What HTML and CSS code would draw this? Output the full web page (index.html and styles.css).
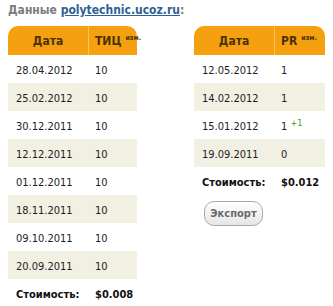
FILE: index.html
```html
<!DOCTYPE html>
<html>
<head>
<meta charset="utf-8">
<link rel="stylesheet" href="styles.css">
</head>
<body>
<div class="title">Данные <a class="site" href="#">polytechnic.ucoz.ru</a>:</div>
<div class="wrap">
  <table class="tbl">
    <thead>
      <tr><th class="c1">Дата</th><th class="c2">ТИЦ<sup class="chg">изм.</sup></th></tr>
    </thead>
    <tbody>
      <tr><td class="d">28.04.2012</td><td class="v">10</td></tr>
      <tr class="alt"><td class="d">25.02.2012</td><td class="v">10</td></tr>
      <tr><td class="d">30.12.2011</td><td class="v">10</td></tr>
      <tr class="alt"><td class="d">12.12.2011</td><td class="v">10</td></tr>
      <tr><td class="d">01.12.2011</td><td class="v">10</td></tr>
      <tr class="alt"><td class="d">18.11.2011</td><td class="v">10</td></tr>
      <tr><td class="d">09.10.2011</td><td class="v">10</td></tr>
      <tr class="alt"><td class="d">20.09.2011</td><td class="v">10</td></tr>
      <tr class="cost"><td class="d">Стоимость:</td><td class="v">$0.008</td></tr>
    </tbody>
  </table>
  <div class="side">
    <table class="tbl">
      <thead>
        <tr><th class="c1">Дата</th><th class="c2">PR<sup class="chg">изм.</sup></th></tr>
      </thead>
      <tbody>
        <tr><td class="d">12.05.2012</td><td class="v">1</td></tr>
        <tr class="alt"><td class="d">14.02.2012</td><td class="v">1</td></tr>
        <tr><td class="d">15.01.2012</td><td class="v">1 <sup class="up">+1</sup></td></tr>
        <tr class="alt"><td class="d">19.09.2011</td><td class="v">0</td></tr>
        <tr class="cost"><td class="d">Стоимость:</td><td class="v">$0.012</td></tr>
      </tbody>
    </table>
    <button class="export">Экспорт</button>
  </div>
</div>
</body>
</html>
```
FILE: styles.css
```css
html, body {
  margin: 0;
  background: #ffffff;
}
body {
  padding: 2px 8px 0;
  font-family: "DejaVu Sans Condensed", "DejaVu Sans", sans-serif;
}
.title {
  font-weight: bold;
  font-size: 12px;
  line-height: 16px;
  color: #7b7b7b;
  margin-bottom: 8px;
}
.site {
  color: #2f5f94;
  text-decoration: underline;
}
.wrap {
  display: flex;
  gap: 57px;
  align-items: flex-start;
}
.tbl {
  border-collapse: separate;
  border-spacing: 0;
  width: 132px;
  table-layout: fixed;
}
.side .tbl {
  width: 131px;
}
.tbl th {
  background: #f5a00e;
  height: 29px;
  padding: 0;
  font-size: 12px;
  font-weight: bold;
  color: #4a3302;
  vertical-align: middle;
}
.tbl th.c1 {
  width: 80px;
  border-right: 1px solid #fbc35f;
  border-top-left-radius: 10px;
  text-align: center;
}
.tbl th.c2 {
  text-align: left;
  padding-left: 6px;
  border-top-right-radius: 10px;
  white-space: nowrap;
}
.chg {
  font-size: 7px;
  font-weight: bold;
  margin-left: 4px;
  vertical-align: 5px;
  line-height: 0;
}
.tbl td {
  height: 28px;
  padding: 3px 0 0;
  box-sizing: border-box;
  font-size: 11px;
  color: #1c1c2c;
  white-space: nowrap;
}
.tbl td.d {
  padding-left: 8px;
}
.tbl td.v {
  padding-left: 6px;
}
.tbl tr.alt td {
  background: #f2efe3;
}
.tbl tr.cost td {
  font-weight: bold;
  font-size: 11px;
  color: #111111;
}
.up {
  color: #3b9a22;
  font-size: 9px;
  vertical-align: 4px;
  line-height: 0;
}
.export {
  display: block;
  margin: 6px 0 0 10px;
  width: 59px;
  height: 25px;
  padding: 0;
  border: 1px solid #a9a9a9;
  border-radius: 10px;
  background: linear-gradient(#ffffff, #e6e6e6);
  font-family: "DejaVu Sans Condensed", "DejaVu Sans", sans-serif;
  font-size: 11px;
  font-weight: bold;
  color: #6a6a6a;
}
```
